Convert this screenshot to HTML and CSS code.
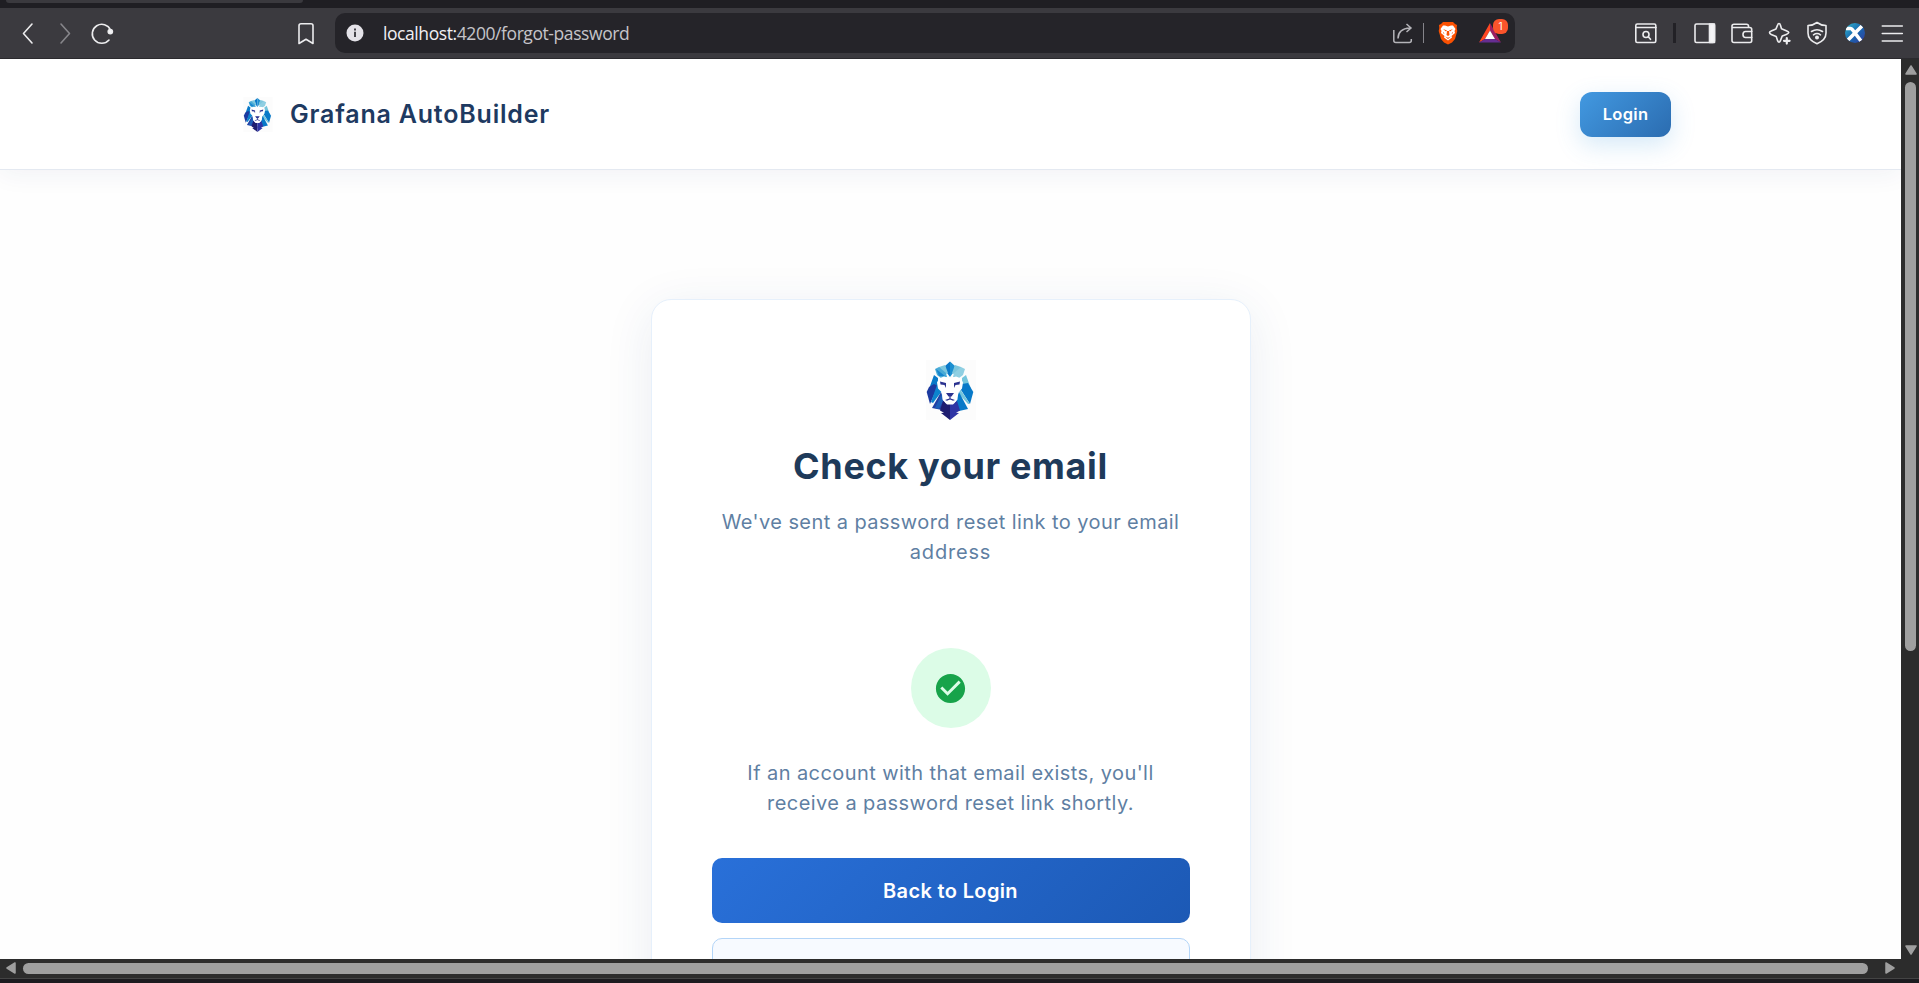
FILE: index.html
```html
<!DOCTYPE html>
<html lang="en">
<head>
<meta charset="utf-8">
<title>Grafana AutoBuilder</title>
<link rel="stylesheet" href="styles.css">
</head>
<body>
<svg class="defs" width="0" height="0">
  <symbol id="lion" viewBox="0 0 50 60">
    <rect width="50" height="60" fill="#fcfcfc"/>
    <path fill="#0a78c8" d="M24 1.500L19 6l2 7 3 4z"/>
    <path fill="#1c8fd0" d="M24 1.500L29 6l-2 7-3 4z"/>
    <path fill="#7cc6dd" d="M19 5l-6 2 0 3 7 4 2-1zM29 5l6 2 0 3-7 4-2-1z"/>
    <path fill="#48aad6" d="M13 7l-4 2 2 6 4 3 6-1-1-4z"/>
    <path fill="#8fcfe2" d="M35 7l4 2-2 6-4 3-6-1 1-4z"/>
    <path fill="#1686cf" d="M10 9l9 7-6 0z"/>
    <path fill="#0879c8" d="M8 15l4 3v9l-4-1-5 3z"/>
    <path fill="#74c5dc" d="M40 15l-4 3v9l9 8 0-6z"/>
    <path fill="#1c3aa0" d="M3 27l5-3 4 2-8 18L.7 32z"/>
    <path fill="#0c84ce" d="M12 22l4 9-9 12-2-1z"/>
    <path fill="#0879c8" d="M36 24l6-1 5.300 9L44 44 35 30z"/>
    <path fill="#74c5dc" d="M34 29l10 15-2 0-9-10z"/>
    <path fill="#2140a4" d="M15 32l2 8 4 4 3 7v3l-8-4-10-2z"/>
    <path fill="#0879c8" d="M33 32l9 17-9 2-3-10z"/>
    <path fill="#1c5fb8" d="M16 33l1 8-4 8-4-1z"/>
    <path fill="#1d1c70" d="M17 41l7 3v16l-9-7 3-.3-4-2.200z"/>
    <path fill="#2f35a5" d="M24 44l7-3 3 9.500-4 2.200 3 .3-9 7z"/>
    <path fill="#fff" d="M18 16.500l6 2 6-2 5 2 2 4-1 6-4 4-.5 7-3.500 4h-8l-3.500-4-.5-7-4-4-1-6 2-4z"/>
    <path fill="#2a328f" d="M14 21.500l6 1.500v5l-1.500-3-4-.5zM34 21.500L28 23v5l1.500-3 4-.5z"/>
    <path fill="#2a328f" d="M20 33h8l-2.500 3.500h-.9v2l4.400 1.500-2 .8-3-1.300-3 1.300-2-.8 4.400-1.500v-2h-.9z"/>
    <path fill="#fff" d="M18.500 41.500l5.500-1 5.500 1-2.500 3h-6z"/>
  </symbol>
</svg>

<div class="tabstrip"><div class="tab-edge"></div></div>
<div class="toolbar">
  <svg class="ic back" viewBox="0 0 24 24"><path d="M17 3l-8.500 9.500L17 22"/></svg>
  <svg class="ic fwd" viewBox="0 0 24 24"><path d="M7 3l8.500 9.500L7 22"/></svg>
  <svg class="ic reload" viewBox="0 0 24 24"><path d="M19 19A9.500 9.500 0 1 1 20.500 9"/><circle cx="20.300" cy="10.600" r="2.100" class="solid"/></svg>
  <svg class="ic mark" viewBox="0 0 24 24"><path d="M7 2.800h10q2 0 2 2V22.500l-7-4.200-7 4.200V4.800q0-2 2-2z"/></svg>
  <div class="address">
    <svg class="info" viewBox="0 0 18 18"><circle cx="9" cy="9" r="8.500" fill="#e4e2e8"/><path d="M9 7.800v5.200M9 4.500v1.900" stroke="#444349" stroke-width="2"/></svg>
    <span class="url"><b>localhost:</b>4200/forgot-password</span>
    <svg class="share" viewBox="0 0 22 24"><path d="M1.800 9v10.500q0 2 2 2h13.500q2 0 2-2V18M6 17.500c0-6 3-10 12-10.500M14.500 3l4.500 4-4.500 4"/></svg>
    <i class="sep"></i>
    <svg class="brave" viewBox="0 0 22 24"><path fill="#fb5102" d="M6 1h10l2 2 2 1-.3 3 .6 3-2.300 8-3 3.500L11 23.500l-4-2-3-3.500-2.300-8 .6-3L2 4l2-1z"/><path fill="#fff" d="M6 4.500h2l3 1 3-1h2L18.500 8l-1 2 .5 2-3.500 3 .5 1.500-4 3-4-3 .5-1.500L4 12l.5-2-1-2z"/><path fill="#fb5102" d="M6 8l4 1.500-1 1zM16 8l-4 1.500 1 1zM10 10h2l.5 4-1.500 1-1.500-1zM8 15.500l3 1.200 3-1.200-3 2.600zM6.500 11l1 2-1.500-1zM15.500 11l-1 2 1.500-1z"/></svg>
    <div class="bat"><svg viewBox="0 0 24 24"><path fill="#ff4724" d="M12 2L1 21.500l6-3.500L12 9.500z"/><path fill="#9e1f63" d="M12 2l11 19.500-6-3.500-5-8.500z"/><path fill="#662d91" d="M1 21.500h22L17 18H7z"/><path fill="#fff" d="M12 9.500L17 18H7z"/></svg><em>1</em></div>
  </div>
  <svg class="ic find" viewBox="0 0 24 24"><rect x="1.800" y="3" width="20" height="18.500" rx="1.500"/><path d="M2 6.500h20M14.500 16l2 2.300"/><circle cx="12" cy="13.500" r="3"/></svg>
  <i class="sep dark"></i>
  <div class="actions">
    <svg class="ic" viewBox="0 0 24 24"><rect x="2" y="3" width="19.500" height="18.500" rx="1.500"/><path class="solid" d="M16.500 3h5v18.500h-5z"/></svg>
    <svg class="ic" viewBox="0 0 24 24"><path d="M18.500 6.500V5q0-1.800-2-1.800H4q-2 0-2 1.800v14.500q0 2 2 2h16q1.700 0 1.700-2V8.500q0-2-2-2H2M22 10.500h-6.500q-2.500 0-2.500 3t2.500 3H22"/></svg>
    <svg class="ic" viewBox="0 0 24 24"><path d="M11 2.500q1 0 1.300 1.300l1.200 4 4.800 2q2.500 1 2.500 1.800t-2.500 1.800l-4 1.500-2 5q-.5 1.300-1.300 1.300t-1.300-1.300l-1.500-4.500-5-2q-1.700-.7-1.700-1.800t1.700-1.700l4.800-2 1.700-4.100Q10 2.500 11 2.500z"/><path d="M18.800 17v5.600M16 19.800h5.600" stroke-width="2.200"/></svg>
    <svg class="ic" viewBox="0 0 24 24"><path d="M12 1.500q4 3 9 3V12q0 7-9 10.800Q3 19 3 12V4.500q5 0 9-3zM6.500 10.500q5.500-3.600 11 0M8.500 13.800q3.500-2.500 7 0"/><circle class="solid" cx="12" cy="16.500" r="1.200"/></svg>
    <svg class="ic plain" viewBox="0 0 24 24"><defs><linearGradient id="x" x2="1" y2="1"><stop stop-color="#35b7cd"/><stop offset=".5" stop-color="#1769b0"/><stop offset="1" stop-color="#343a9d"/></linearGradient><clipPath id="xc"><circle cx="12" cy="12" r="10"/></clipPath></defs><circle cx="12" cy="12" r="10" fill="url(#x)"/><path clip-path="url(#xc)" d="M3 7.500h4.500q1 0 1.800 1L18 20M19 5L5 19" stroke="#fff" stroke-width="3.600" fill="none"/></svg>
    <svg class="ic" viewBox="0 0 24 24"><path d="M2.300 5h20M2.300 12.500h20M2.300 20h20"/></svg>
  </div>
</div>

<div class="viewport">
  <div class="page">
    <header class="header">
      <div class="brand"><svg class="brand-logo"><use href="#lion"/></svg><span class="brand-name">Grafana AutoBuilder</span></div>
      <button class="login">Login</button>
    </header>
    <main class="main">
      <section class="card">
        <svg class="card-logo"><use href="#lion"/></svg>
        <h1 class="title">Check your email</h1>
        <p class="copy sub">We've sent a password reset link to your email<br><span class="word">address</span></p>
        <div class="success"><svg viewBox="0 0 24 24"><path fill="#17a34a" d="M12 2C6.480 2 2 6.480 2 12s4.480 10 10 10 10-4.480 10-10S17.520 2 12 2zm-2 15l-5-5 1.410-1.410L10 14.170l7.590-7.590L19 8l-9 9z"/></svg></div>
        <p class="copy note">If an account with that email exists, you'll<br>receive a password reset link shortly.</p>
        <button class="primary">Back to Login</button>
        <button class="secondary"></button>
      </section>
    </main>
  </div>
  <div class="vbar">
    <svg class="arr" viewBox="0 0 12 10"><path d="M6 1l5 8H1z"/></svg>
    <div class="vthumb"></div>
    <svg class="arr" viewBox="0 0 12 10"><path d="M6 9l5-8H1z"/></svg>
  </div>
</div>
<div class="hbar">
  <svg class="harr" viewBox="0 0 10 12"><path d="M1 6l8-5v10z"/></svg>
  <div class="hthumb"></div>
  <svg class="harr right" viewBox="0 0 10 12"><path d="M9 6L1 1v10z"/></svg>
</div>
</body>
</html>
```

FILE: styles.css
```css
* { box-sizing: border-box; }
html { height: 983px; overflow: hidden; }
body { margin: 0; width: 1919px; height: 983px; overflow: hidden; background: #1c1b1f; font-family: Inter, "Open Sans", sans-serif; }
.defs { display: block; }
button { font-family: inherit; border: 0; padding: 0; }

.tabstrip { height: 8px; background: #1f1e23; }
.tab-edge { width: 297px; height: 3px; margin-left: 6px; float: left; background: #3a393e; border-radius: 0 0 5px 5px; }
.toolbar { height: 51px; background: #3b3a3f; border-bottom: 1px solid #2b2a2e; display: flex; align-items: center; padding-left: 15px; }
.ic { width: 24px; height: 24px; flex: none; fill: none; stroke: #ececee; stroke-width: 1.6; stroke-linecap: round; stroke-linejoin: round; }
.ic .solid { fill: #f4f4f6; }
.plain { stroke: none; }
.plain path { stroke-linecap: butt; }
.fwd { margin-left: 15px; stroke: #87868b; }
.reload { margin-left: 12px; }
.mark { margin-left: 180px; }
.address { width: 1180px; height: 40px; margin-left: 17px; background: #252429; border-radius: 10px; display: flex; align-items: center; flex: none; }
.info { width: 18px; height: 18px; margin-left: 11px; }
.url { margin-left: 19px; width: 1009px; font: 17.5px/24px "Open Sans", sans-serif; letter-spacing: -.42px; color: #c5c4c9; }
.url b { font-weight: 400; color: #f1f0f4; }
.share { width: 22px; height: 24px; fill: none; stroke: #b5b4b9; stroke-width: 1.5; }
.sep { width: 1px; height: 20px; background: #85848a; margin: 0 14px 0 9px; }
.brave { width: 22px; height: 24px; margin-left: -1px; }
.bat { position: relative; width: 24px; height: 24px; margin-left: 19px; }
.bat svg { width: 24px; height: 24px; display: block; }
.bat em { position: absolute; left: 15px; top: -2px; width: 15px; height: 15px; border-radius: 6px; background: #fb542b; color: #fff; font: 10px/15px Inter, sans-serif; text-align: center; }
.find { margin-left: 119px; }
.sep.dark { width: 3px; background: #222126; margin: 0 17px 0 15px; }
.actions { display: flex; gap: 13.4px; }

.viewport { display: flex; height: 900px; }
.page { width: 1901px; height: 900px; overflow: hidden; background: #fefefe; display: flex; flex-direction: column; }
.header { height: 111px; flex: none; padding: 0 230px 0 243px; display: flex; align-items: center; justify-content: space-between; background: #fff; border-bottom: 1px solid #e4e9f1; box-shadow: 0 4px 24px rgba(30, 58, 110, .06); }
.brand { display: flex; align-items: center; }
.brand-logo { width: 30px; height: 35px; }
.brand-name { margin-left: 17px; font-size: 25px; line-height: 36px; font-weight: 600; color: #1e3a61; letter-spacing: .8px; white-space: nowrap; }
.login { width: 91px; height: 45px; border-radius: 12px; background: linear-gradient(135deg, #4299e1, #2b6cb0); color: #fff; font-size: 16.5px; font-weight: 600; letter-spacing: .3px; box-shadow: 0 8px 24px rgba(66, 153, 225, .22); }
.main { display: flex; justify-content: center; padding-top: 129px; }
.card { width: 600px; height: 850px; flex: none; padding: 60px 60px 0; display: flex; flex-direction: column; align-items: center; background: #fff; border: 1px solid #e6f0fb; border-radius: 20px; box-shadow: 0 10px 50px rgba(30, 70, 120, .09); }
.card-logo { width: 50px; height: 60px; flex: none; }
.title { margin: 19px 0 0; font-size: 36px; line-height: 54px; font-weight: 700; color: #1e3a5a; letter-spacing: .65px; white-space: nowrap; }
.copy { margin: 0; font-size: 20px; line-height: 30px; letter-spacing: .42px; color: #5f7fa3; text-align: center; white-space: nowrap; }
.word { letter-spacing: .8px; }
.sub { margin-top: 14px; }
.success { width: 80px; height: 80px; flex: none; margin-top: 81px; border-radius: 50%; background: #dcfce7; display: flex; align-items: center; justify-content: center; }
.success svg { width: 35px; height: 35px; }
.note { margin-top: 30px; }
.primary { width: 478px; height: 65px; flex: none; margin-top: 40px; border-radius: 10px; background: linear-gradient(135deg, #2970d9, #1c59b5); color: #fff; font-size: 20px; font-weight: 600; letter-spacing: .35px; }
.secondary { width: 478px; height: 65px; flex: none; margin-top: 15px; border-radius: 10px; background: #f7faff; border: 1px solid #b3d5f8; }

.vbar { width: 18px; height: 900px; padding: 6px 2px 4px 4px; background: #2c2c2c; display: flex; flex-direction: column; }
.arr { width: 12px; height: 10px; flex: none; }
.arr path, .harr path { fill: #9f9f9f; stroke: #9f9f9f; stroke-width: 1.5; stroke-linejoin: round; }
.vthumb { width: 11px; height: 569px; margin: 7px 0 auto; border-radius: 6px; background: #9f9f9f; }
.hbar { height: 20px; background: #2c2c2c; border-bottom: 1px solid #444; display: flex; align-items: center; padding: 0 24px 1px 6px; }
.harr { width: 10px; height: 12px; flex: none; }
.hthumb { width: 1845px; height: 11px; margin-left: 7px; border-radius: 6px; background: #9f9f9f; }
.right { margin-left: auto; }
```
